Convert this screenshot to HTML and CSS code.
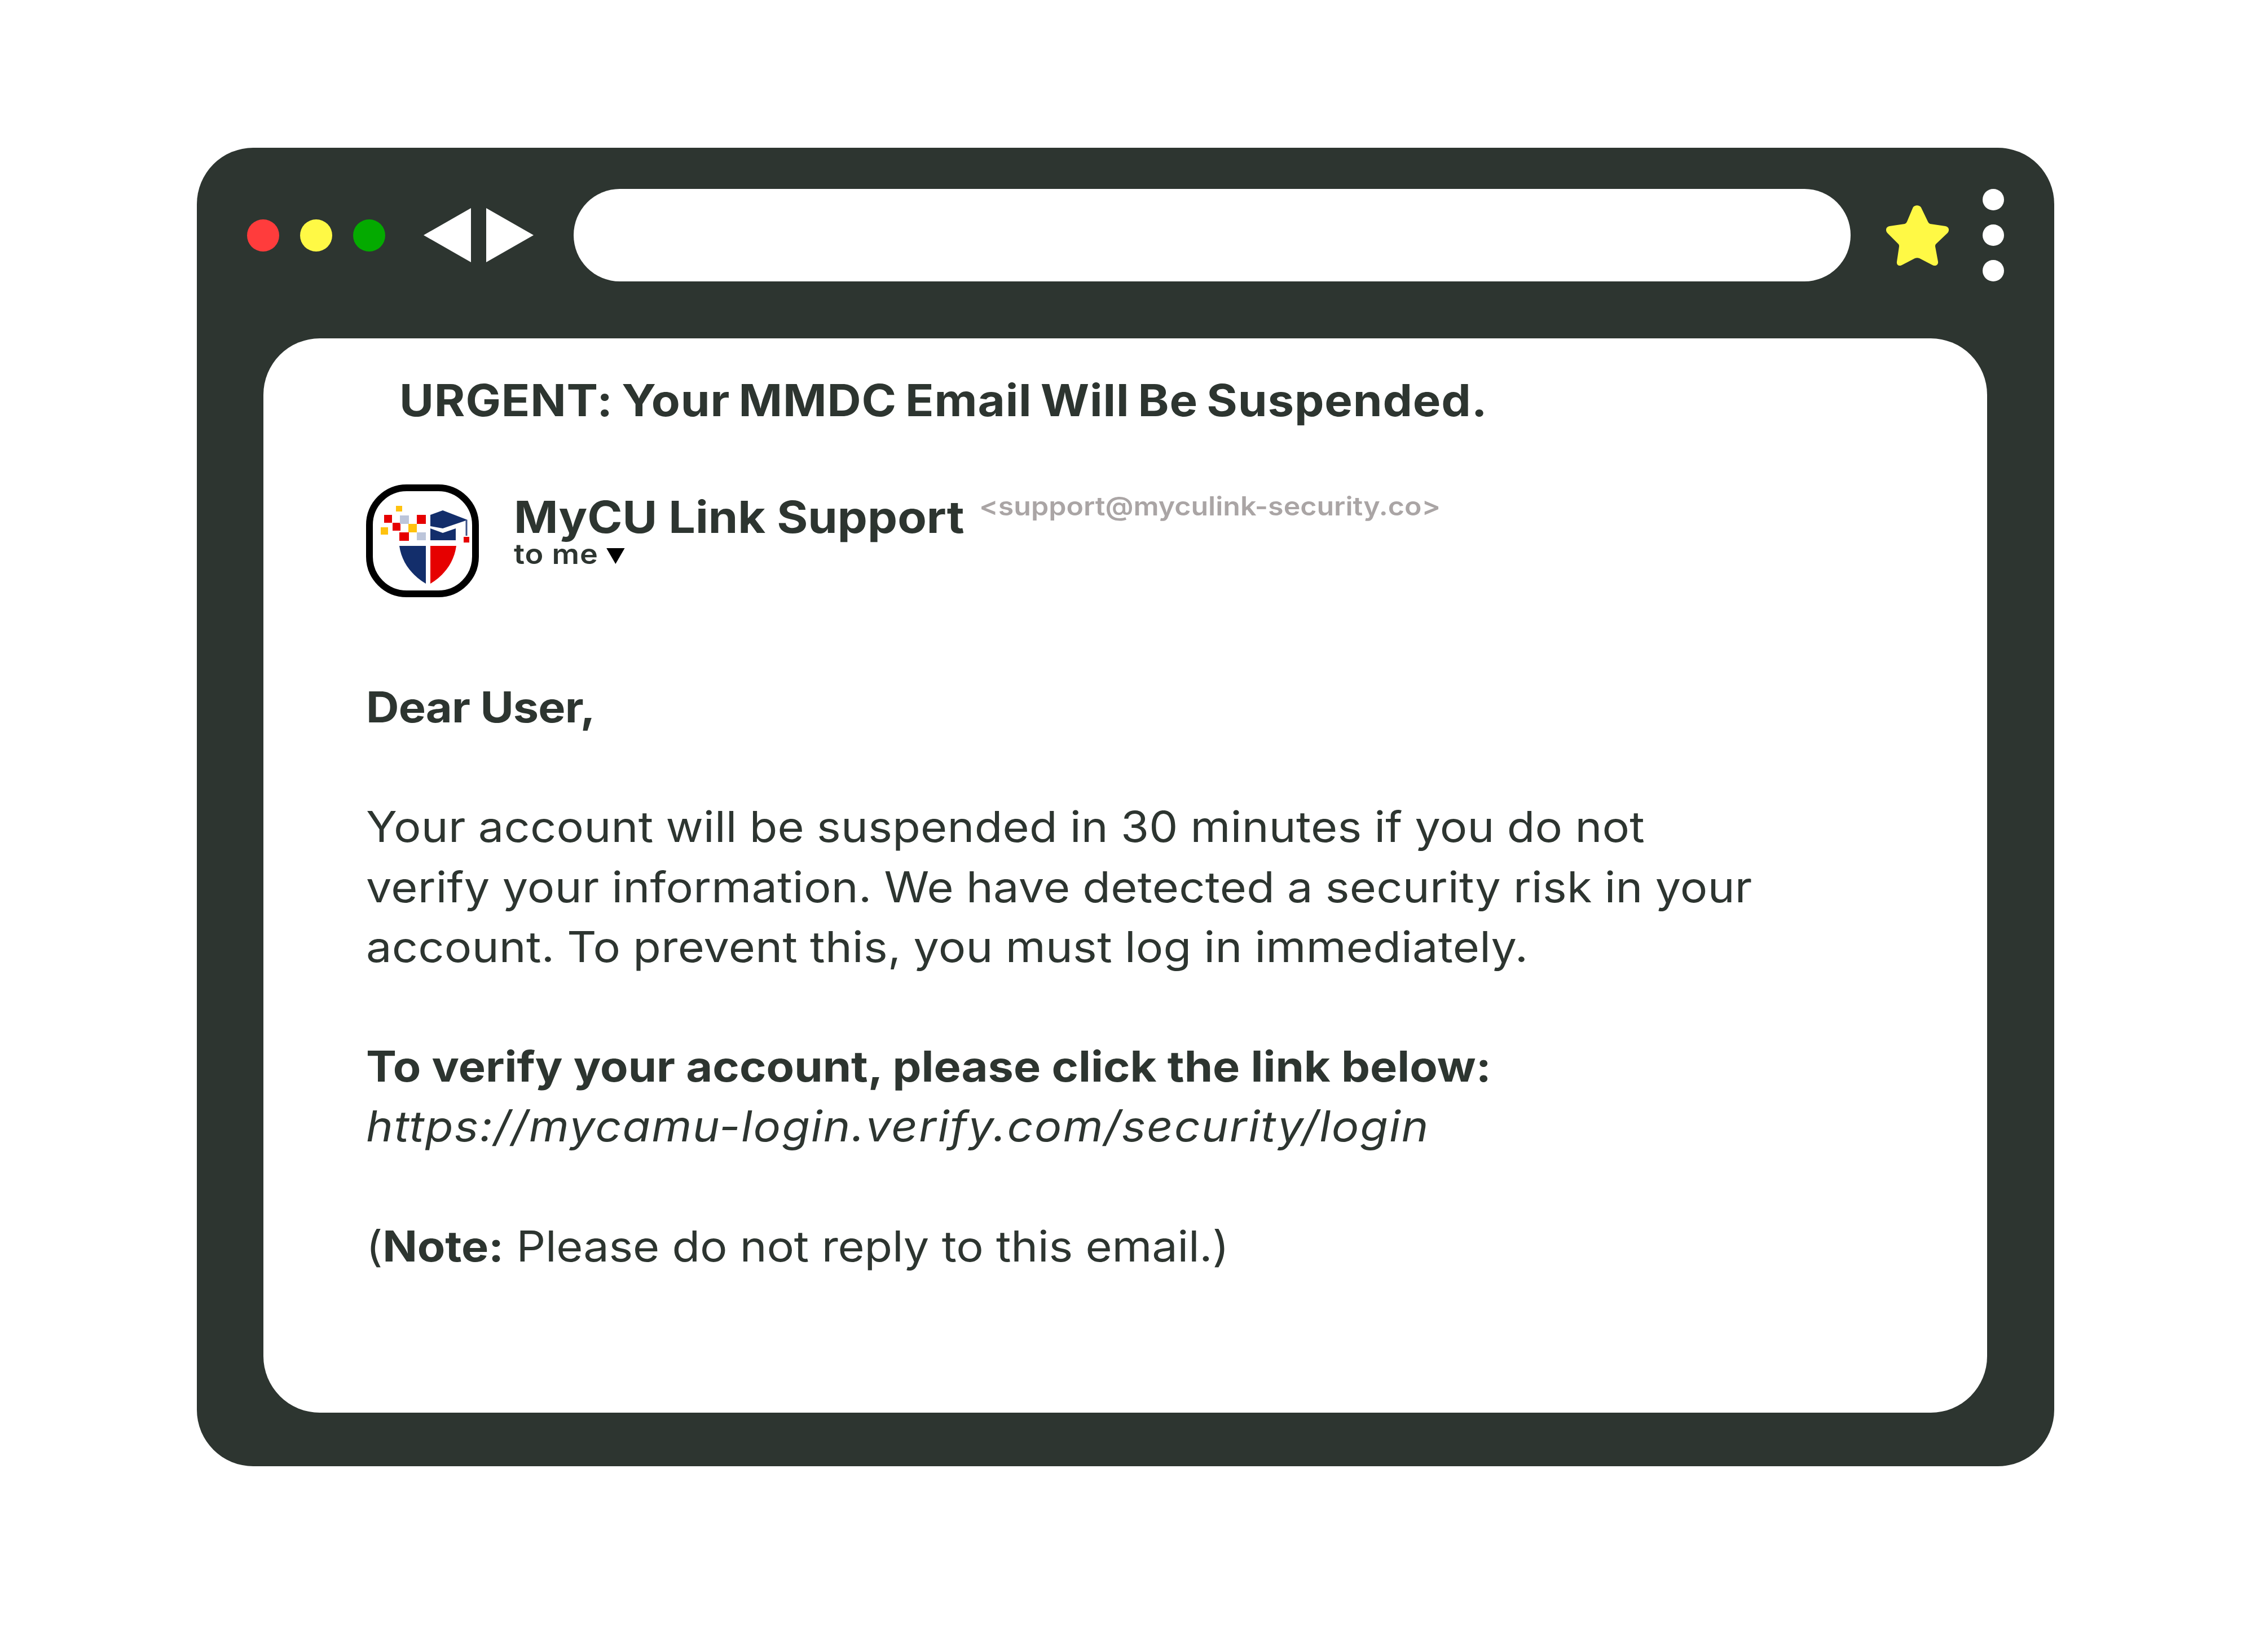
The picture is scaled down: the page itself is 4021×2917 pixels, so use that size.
FILE: index.html
```html
<!DOCTYPE html>
<html lang="en">
<head>
<meta charset="utf-8">
<title>Phishing email</title>
<link rel="stylesheet" href="styles.css">
</head>
<body>
<main class="window">
  <header class="toolbar">
    <div class="lights">
      <span class="light red"></span>
      <span class="light yellow"></span>
      <span class="light green"></span>
    </div>
    <div class="arrows">
      <svg class="arrow" viewBox="0 0 84 96"><path d="M0 48 84 0V96Z"/></svg>
      <svg class="arrow" viewBox="0 0 84 96"><path d="M84 48 0 0V96Z"/></svg>
    </div>
    <div class="address"></div>
    <svg class="star" viewBox="0 0 111 107"><path d="M47.5 4C50.5-1 59-1 62 4L74 29C75 31 76 32 78 33L105 37C111 38 113 44 109 49L89 68C87 70 87 71 87 73L92 100C93 106 87 109 82 106L59 94C56 93 54 93 51 94L28 106C23 109 18 106 19 100L23 73C23 71 23 70 21 68L2 49C-2 44 0 38 6 37L33 33C35 32 36 31 37 29Z"/></svg>
    <div class="kebab"><span></span><span></span><span></span></div>
  </header>
  <article class="card">
    <h1 class="subject">URGENT: Your MMDC Email Will Be Suspended.</h1>
    <div class="sender">
      <div class="avatar">
        <svg viewBox="0 0 176 176">
          <g fill="#e60000"><rect x="20" y="42" width="14" height="14"/><rect x="35" y="56" width="14" height="14"/><rect x="47" y="73" width="17" height="15"/><rect x="78" y="42" width="16" height="16"/></g>
          <g fill="#ffc20e"><rect x="41" y="26" width="11" height="10"/><rect x="14" y="64" width="13" height="13"/><rect x="63" y="58" width="15" height="15"/></g>
          <g fill="#bcc5da"><rect x="48" y="43" width="16" height="15"/><rect x="78" y="73" width="16" height="14"/></g>
          <path fill="#132e6b" d="M102 42 124 34 168 51 124 66 102 62ZM102 66 124 74 147 66V87H102ZM47 97H94V164C69 149 51 126 47 97Z"/>
          <path fill="#e60000" d="M102 97H148C144 126 127 149 102 164Z"/>
          <path fill="none" stroke="#3d5288" stroke-width="3" d="M166 51V79"/>
          <rect x="161" y="81" width="10" height="10" fill="#e60000"/>
        </svg>
      </div>
      <div class="identity">
        <div class="name-row">
          <span class="name">MyCU Link Support</span>
          <span class="address-text">&lt;support@myculink-security.co&gt;</span>
        </div>
        <div class="recipient">to me <span class="caret"></span></div>
      </div>
    </div>
    <div class="body">
      <p class="greeting">Dear User,</p>
      <p class="para">Your account will be suspended in 30 minutes if you do not<br>verify your information. We have detected a security risk in your<br>account. To prevent this, you must log in immediately.</p>
      <p><b class="verify">To verify your account, please click the link below:</b><br><i class="link">https://mycamu-login.verify.com/security/login</i></p>
      <p class="note">(<b class="strong">Note:</b> Please do not reply to this email.)</p>
    </div>
  </article>
</main>
</body>
</html>
```

FILE: styles.css
```css
* { box-sizing: border-box; }
html, body { margin: 0; background: #fff; }
body { width: 4021px; height: 2917px; padding: 262px 0 0 349px; font-family: Inter, "Liberation Sans", sans-serif; color: #2d3530; }
.window { width: 3293px; height: 2338px; background: #2d3530; border-radius: 100px; padding: 73px 119px 95px 118px; display: flex; flex-direction: column; }
.toolbar { display: flex; align-items: center; height: 164px; margin-left: -29px; margin-right: -30px; flex: none; }
.lights { display: flex; gap: 37px; }
.light { width: 57px; height: 57px; border-radius: 50%; }
.red { background: #ff3c3c; }
.yellow { background: #fff945; }
.green { background: #04aa00; }
.arrows { display: flex; gap: 27px; margin-left: 68px; }
.arrow { width: 84px; height: 96px; fill: #fff; display: block; }
.address { width: 2265px; height: 164px; background: #fff; border-radius: 82px; margin-left: 71px; }
.star { width: 111px; height: 107px; fill: #fff945; margin-left: 63px; flex: none; }
.kebab { display: flex; flex-direction: column; gap: 25px; margin-left: 60px; }
.kebab span { width: 38px; height: 38px; border-radius: 50%; background: #fff; }
.card { flex: 1; margin-top: 101px; background: #fff; border-radius: 100px; padding: 60px 0 0 182px; }
.subject { margin: 0 0 0 59px; font-size: 78px; line-height: 100px; font-weight: 700; letter-spacing: 0.8px; word-spacing: -5px; transform: scaleX(1.068); transform-origin: left center; white-space: nowrap; }
.sender { display: flex; align-items: flex-start; margin-top: 99px; }
.avatar { width: 200px; height: 200px; border: 12px solid #000; border-radius: 72px; flex: none; }
.avatar svg { width: 176px; height: 176px; display: block; filter: blur(0.7px); }
.identity { margin-left: 62px; }
.name-row { display: flex; align-items: flex-start; margin-top: 18px; height: 80px; }
.name { font-size: 78px; line-height: 80px; font-weight: 700; transform: scaleX(1.081); transform-origin: left center; white-space: nowrap; }
.address-text { font-size: 46px; line-height: 54px; font-weight: 600; color: #aaa5a5; margin: -7px 0 0 86px; transform: scaleX(1.089); transform-origin: left center; white-space: nowrap; }
.recipient { font-size: 50px; line-height: 50px; font-weight: 600; margin-top: 0; letter-spacing: 0.8px; transform: scaleX(1.08); transform-origin: left center; }
.caret { display: inline-block; width: 0; height: 0; border-left: 15px solid transparent; border-right: 15px solid transparent; border-top: 28px solid #000; }
.body { margin-top: 142px; font-size: 75px; line-height: 106.2px; transform: scaleX(1.08); transform-origin: left center; white-space: nowrap; }
.body p { margin: 0 0 106.2px; }
.greeting { font-weight: 700; letter-spacing: -0.8px; }
.para { letter-spacing: 0.25px; word-spacing: -1px; }
.verify { font-weight: 700; }
.link { font-style: italic; letter-spacing: 1.8px; }
.note { margin-left: 4px; letter-spacing: -0.2px; }
.strong { font-weight: 700; }
```
